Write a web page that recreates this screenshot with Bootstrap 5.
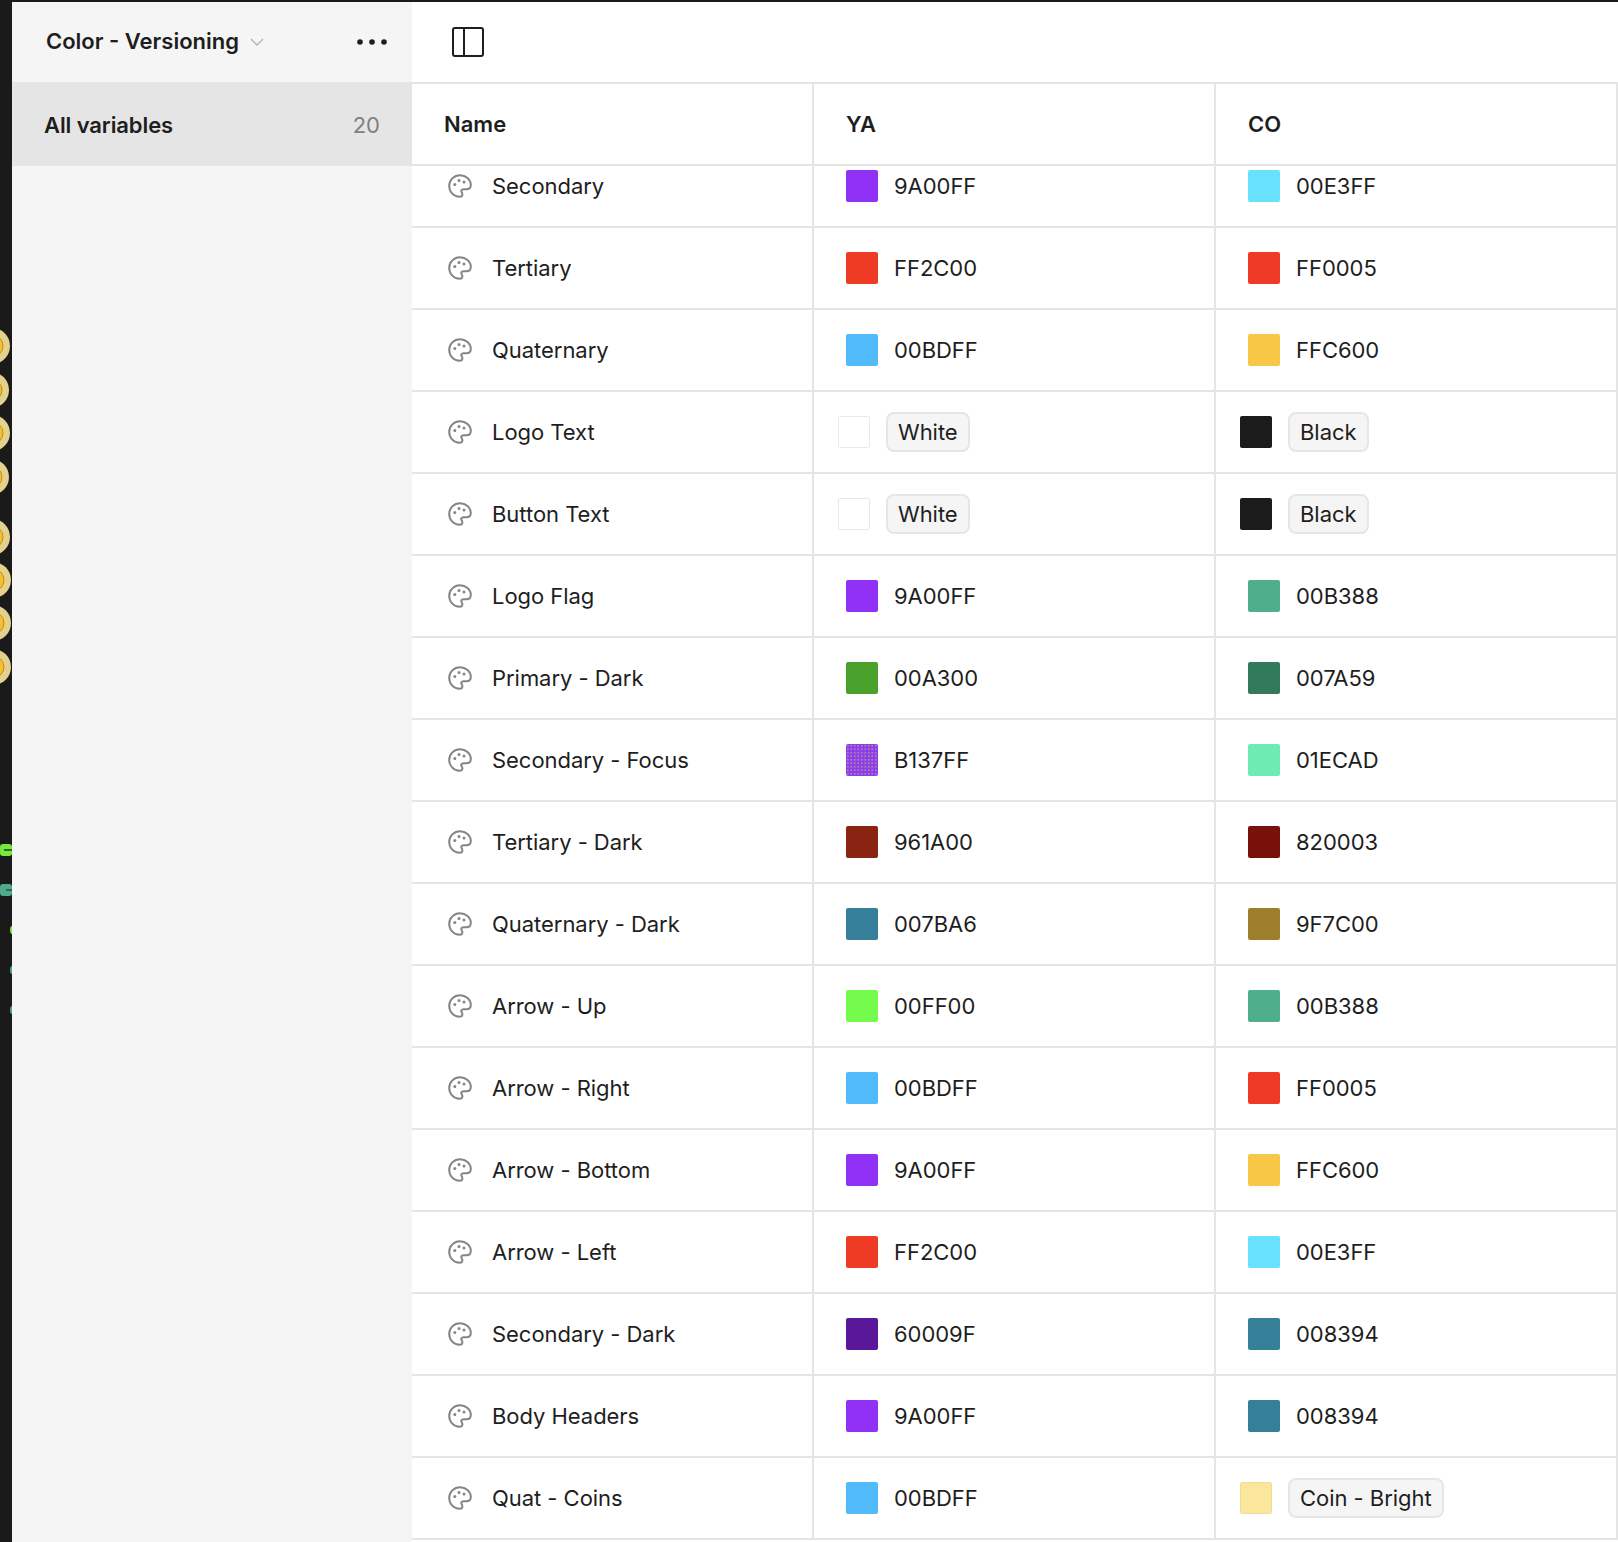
<!DOCTYPE html>
<html lang="en">
<head>
<meta charset="utf-8">
<title>Color - Versioning</title>
<link href="https://cdn.jsdelivr.net/npm/bootstrap@5.3.0/dist/css/bootstrap.min.css" rel="stylesheet">
<style>
html,body{height:100%;margin:0}
body{background:#1a1a1a;font-family:Inter,"Liberation Sans",sans-serif;color:#1e1e1e;font-size:22px;line-height:28px;overflow:hidden;letter-spacing:-.04px}
.shell{height:1542px;padding-top:2px}
.strip{width:12px;flex:none;height:1540px}
.strip svg{display:block}
.side{width:400px;flex:none;background:#f5f5f5}
.side-head{height:80px;padding:0 25px 2px 34px}
.side-title{font-weight:600;letter-spacing:0}
.title-wrap{gap:11px}
.title-wrap svg{margin-top:2px}
.more-dots{margin-top:2px}
.side-item{height:84px;background:#e5e5e5;padding:2px 32px 0 32px;font-weight:600;letter-spacing:-.1px}
.side-count{font-weight:400;color:#808080;letter-spacing:0}
.main{background:#fff;min-width:0}
.toolbar{height:82px;border-bottom:2px solid #e5e5e5;padding-left:40px}
.head-row{height:82px;border-bottom:2px solid #e5e5e5;font-weight:600;letter-spacing:0;position:relative;z-index:1;background:#fff}
.cellx{height:100%;border-right:2px solid #e5e5e5;padding-left:32px;gap:16px}
.cellx.alias{padding-left:24px}
.clip{overflow:hidden}
.scroller{margin-top:-20px}
.vrow{height:82px;border-bottom:2px solid #e5e5e5}
.namecell{padding-left:36px;gap:20px}
.sw{width:32px;height:32px;border-radius:2px;flex:none}
.sw.line{border:1px solid #e9e9e9}
.chip{height:40px;padding:0 10px;border:2px solid #e6e6e6;border-radius:8px;background:#f5f5f5;display:flex;align-items:center}
.dotted{background-image:radial-gradient(#a9c84d .5px,transparent .8px);background-size:3.500px 3.500px}
</style>
</head>
<body>
<svg width="0" height="0" class="position-absolute" aria-hidden="true">
<symbol id="pal" viewBox="0 0 24 24"><path d="M12 1.300C6 1.300 1.200 6 1.200 12S6 22.700 11.400 22.700c1.900 0 3-1.100 3-2.500 0-.8-.3-1.300-.7-1.900-.5-.7-.7-1.300-.3-2 .4-.7 1.100-1 2.100-1h2.800c2.700 0 4.500-1.700 4.500-4.300C22.800 5.500 17.800 1.300 12 1.300z" fill="none" stroke="#858585" stroke-width="2"/><circle cx="6.800" cy="10.600" r="1.500" fill="#858585"/><circle cx="11" cy="6.500" r="1.500" fill="#858585"/><circle cx="16" cy="8" r="1.500" fill="#858585"/></symbol>
</svg>
<div class="shell d-flex">
  <div class="strip">
    <svg width="12" height="1540" viewBox="0 2 12 1540">
      <defs><g id="coin"><circle r="18" fill="#e3d18c"/><circle r="11" fill="#f5bf2f" stroke="#b98f22" stroke-width="1"/></g></defs>
      <use href="#coin" x="-8" y="346"/><use href="#coin" x="-9" y="390"/><use href="#coin" x="-8" y="433"/><use href="#coin" x="-9" y="477"/>
      <use href="#coin" x="-8" y="537"/><use href="#coin" x="-7" y="580"/><use href="#coin" x="-7" y="623"/><use href="#coin" x="-7" y="667"/>
      <rect x="0" y="844" width="12" height="12" rx="3" fill="#76e83c"/><rect x="4" y="849" width="8" height="2" fill="#2f6b2a"/>
      <rect x="0" y="884" width="12" height="12" rx="3" fill="#4fa98c"/><rect x="6" y="889" width="6" height="2" fill="#2c6a58"/>
      <ellipse cx="12" cy="930" rx="2" ry="4" fill="#76e83c"/><ellipse cx="12" cy="970" rx="2" ry="4" fill="#4fa98c"/><ellipse cx="12" cy="1010" rx="2" ry="4" fill="#4fa98c"/>
    </svg>
  </div>
  <aside class="side">
    <div class="side-head d-flex align-items-center justify-content-between">
      <div class="d-flex align-items-center title-wrap"><span class="side-title">Color - Versioning</span>
        <svg width="14" height="9" viewBox="0 0 14 9"><path d="M1 1l6 6 6-6" fill="none" stroke="#b3b3b3" stroke-width="1.300"/></svg></div>
      <svg class="more-dots" width="30" height="6" viewBox="0 0 30 6"><circle cx="3" cy="3" r="2.800" fill="#1e1e1e"/><circle cx="15" cy="3" r="2.800" fill="#1e1e1e"/><circle cx="27" cy="3" r="2.800" fill="#1e1e1e"/></svg>
    </div>
    <div class="side-item d-flex align-items-center justify-content-between"><span>All variables</span><span class="side-count">20</span></div>
  </aside>
  <main class="main flex-grow-1 d-flex flex-column">
    <div class="toolbar d-flex align-items-center">
      <svg width="32" height="30" viewBox="0 0 32 30"><rect x="1" y="1" width="30" height="28" rx="2" fill="none" stroke="#1e1e1e" stroke-width="2"/><path d="M12 1v28" stroke="#1e1e1e" stroke-width="2"/></svg>
    </div>
    <div class="row g-0 head-row">
      <div class="col-4"><div class="cellx d-flex align-items-center">Name</div></div>
      <div class="col-4"><div class="cellx d-flex align-items-center">YA</div></div>
      <div class="col-4"><div class="cellx d-flex align-items-center">CO</div></div>
    </div>
    <div class="clip flex-grow-1"><div class="scroller">
      <div class="row g-0 vrow"><div class="col-4"><div class="cellx namecell d-flex align-items-center"><svg width="24" height="24"><use href="#pal"/></svg>Secondary</div></div><div class="col-4"><div class="cellx d-flex align-items-center"><span class="sw" style="background:#9231f6"></span>9A00FF</div></div><div class="col-4"><div class="cellx d-flex align-items-center"><span class="sw" style="background:#67e1fe"></span>00E3FF</div></div></div>
      <div class="row g-0 vrow"><div class="col-4"><div class="cellx namecell d-flex align-items-center"><svg width="24" height="24"><use href="#pal"/></svg>Tertiary</div></div><div class="col-4"><div class="cellx d-flex align-items-center"><span class="sw" style="background:#ee3c24"></span>FF2C00</div></div><div class="col-4"><div class="cellx d-flex align-items-center"><span class="sw" style="background:#ee3a26"></span>FF0005</div></div></div>
      <div class="row g-0 vrow"><div class="col-4"><div class="cellx namecell d-flex align-items-center"><svg width="24" height="24"><use href="#pal"/></svg>Quaternary</div></div><div class="col-4"><div class="cellx d-flex align-items-center"><span class="sw" style="background:#50bafb"></span>00BDFF</div></div><div class="col-4"><div class="cellx d-flex align-items-center"><span class="sw" style="background:#f8c745"></span>FFC600</div></div></div>
      <div class="row g-0 vrow"><div class="col-4"><div class="cellx namecell d-flex align-items-center"><svg width="24" height="24"><use href="#pal"/></svg>Logo Text</div></div><div class="col-4"><div class="cellx alias d-flex align-items-center"><span class="sw line" style="background:#fff"></span><span class="chip">White</span></div></div><div class="col-4"><div class="cellx alias d-flex align-items-center"><span class="sw" style="background:#1b1b1b"></span><span class="chip">Black</span></div></div></div>
      <div class="row g-0 vrow"><div class="col-4"><div class="cellx namecell d-flex align-items-center"><svg width="24" height="24"><use href="#pal"/></svg>Button Text</div></div><div class="col-4"><div class="cellx alias d-flex align-items-center"><span class="sw line" style="background:#fff"></span><span class="chip">White</span></div></div><div class="col-4"><div class="cellx alias d-flex align-items-center"><span class="sw" style="background:#1b1b1b"></span><span class="chip">Black</span></div></div></div>
      <div class="row g-0 vrow"><div class="col-4"><div class="cellx namecell d-flex align-items-center"><svg width="24" height="24"><use href="#pal"/></svg>Logo Flag</div></div><div class="col-4"><div class="cellx d-flex align-items-center"><span class="sw" style="background:#9231f6"></span>9A00FF</div></div><div class="col-4"><div class="cellx d-flex align-items-center"><span class="sw" style="background:#4fae8c"></span>00B388</div></div></div>
      <div class="row g-0 vrow"><div class="col-4"><div class="cellx namecell d-flex align-items-center"><svg width="24" height="24"><use href="#pal"/></svg>Primary - Dark</div></div><div class="col-4"><div class="cellx d-flex align-items-center"><span class="sw" style="background:#4aa12c"></span>00A300</div></div><div class="col-4"><div class="cellx d-flex align-items-center"><span class="sw" style="background:#33795c"></span>007A59</div></div></div>
      <div class="row g-0 vrow"><div class="col-4"><div class="cellx namecell d-flex align-items-center"><svg width="24" height="24"><use href="#pal"/></svg>Secondary - Focus</div></div><div class="col-4"><div class="cellx d-flex align-items-center"><span class="sw dotted" style="background-color:#9238f3"></span>B137FF</div></div><div class="col-4"><div class="cellx d-flex align-items-center"><span class="sw" style="background:#6eebb3"></span>01ECAD</div></div></div>
      <div class="row g-0 vrow"><div class="col-4"><div class="cellx namecell d-flex align-items-center"><svg width="24" height="24"><use href="#pal"/></svg>Tertiary - Dark</div></div><div class="col-4"><div class="cellx d-flex align-items-center"><span class="sw" style="background:#892312"></span>961A00</div></div><div class="col-4"><div class="cellx d-flex align-items-center"><span class="sw" style="background:#79110b"></span>820003</div></div></div>
      <div class="row g-0 vrow"><div class="col-4"><div class="cellx namecell d-flex align-items-center"><svg width="24" height="24"><use href="#pal"/></svg>Quaternary - Dark</div></div><div class="col-4"><div class="cellx d-flex align-items-center"><span class="sw" style="background:#367f9b"></span>007BA6</div></div><div class="col-4"><div class="cellx d-flex align-items-center"><span class="sw" style="background:#9c7e2b"></span>9F7C00</div></div></div>
      <div class="row g-0 vrow"><div class="col-4"><div class="cellx namecell d-flex align-items-center"><svg width="24" height="24"><use href="#pal"/></svg>Arrow - Up</div></div><div class="col-4"><div class="cellx d-flex align-items-center"><span class="sw" style="background:#75fb4c"></span>00FF00</div></div><div class="col-4"><div class="cellx d-flex align-items-center"><span class="sw" style="background:#4fae8c"></span>00B388</div></div></div>
      <div class="row g-0 vrow"><div class="col-4"><div class="cellx namecell d-flex align-items-center"><svg width="24" height="24"><use href="#pal"/></svg>Arrow - Right</div></div><div class="col-4"><div class="cellx d-flex align-items-center"><span class="sw" style="background:#50bafb"></span>00BDFF</div></div><div class="col-4"><div class="cellx d-flex align-items-center"><span class="sw" style="background:#ee3a26"></span>FF0005</div></div></div>
      <div class="row g-0 vrow"><div class="col-4"><div class="cellx namecell d-flex align-items-center"><svg width="24" height="24"><use href="#pal"/></svg>Arrow - Bottom</div></div><div class="col-4"><div class="cellx d-flex align-items-center"><span class="sw" style="background:#9231f6"></span>9A00FF</div></div><div class="col-4"><div class="cellx d-flex align-items-center"><span class="sw" style="background:#f8c745"></span>FFC600</div></div></div>
      <div class="row g-0 vrow"><div class="col-4"><div class="cellx namecell d-flex align-items-center"><svg width="24" height="24"><use href="#pal"/></svg>Arrow - Left</div></div><div class="col-4"><div class="cellx d-flex align-items-center"><span class="sw" style="background:#ee3c24"></span>FF2C00</div></div><div class="col-4"><div class="cellx d-flex align-items-center"><span class="sw" style="background:#67e1fe"></span>00E3FF</div></div></div>
      <div class="row g-0 vrow"><div class="col-4"><div class="cellx namecell d-flex align-items-center"><svg width="24" height="24"><use href="#pal"/></svg>Secondary - Dark</div></div><div class="col-4"><div class="cellx d-flex align-items-center"><span class="sw" style="background:#59189a"></span>60009F</div></div><div class="col-4"><div class="cellx d-flex align-items-center"><span class="sw" style="background:#357f99"></span>008394</div></div></div>
      <div class="row g-0 vrow"><div class="col-4"><div class="cellx namecell d-flex align-items-center"><svg width="24" height="24"><use href="#pal"/></svg>Body Headers</div></div><div class="col-4"><div class="cellx d-flex align-items-center"><span class="sw" style="background:#9231f6"></span>9A00FF</div></div><div class="col-4"><div class="cellx d-flex align-items-center"><span class="sw" style="background:#357f99"></span>008394</div></div></div>
      <div class="row g-0 vrow"><div class="col-4"><div class="cellx namecell d-flex align-items-center"><svg width="24" height="24"><use href="#pal"/></svg>Quat - Coins</div></div><div class="col-4"><div class="cellx d-flex align-items-center"><span class="sw" style="background:#50bafb"></span>00BDFF</div></div><div class="col-4"><div class="cellx alias d-flex align-items-center"><span class="sw" style="background:#fbe79c;border:1px solid #f0dc92"></span><span class="chip">Coin - Bright</span></div></div></div>
    </div></div>
  </main>
</div>
<script src="https://cdn.jsdelivr.net/npm/bootstrap@5.3.0/dist/js/bootstrap.bundle.min.js"></script>
</body>
</html>
